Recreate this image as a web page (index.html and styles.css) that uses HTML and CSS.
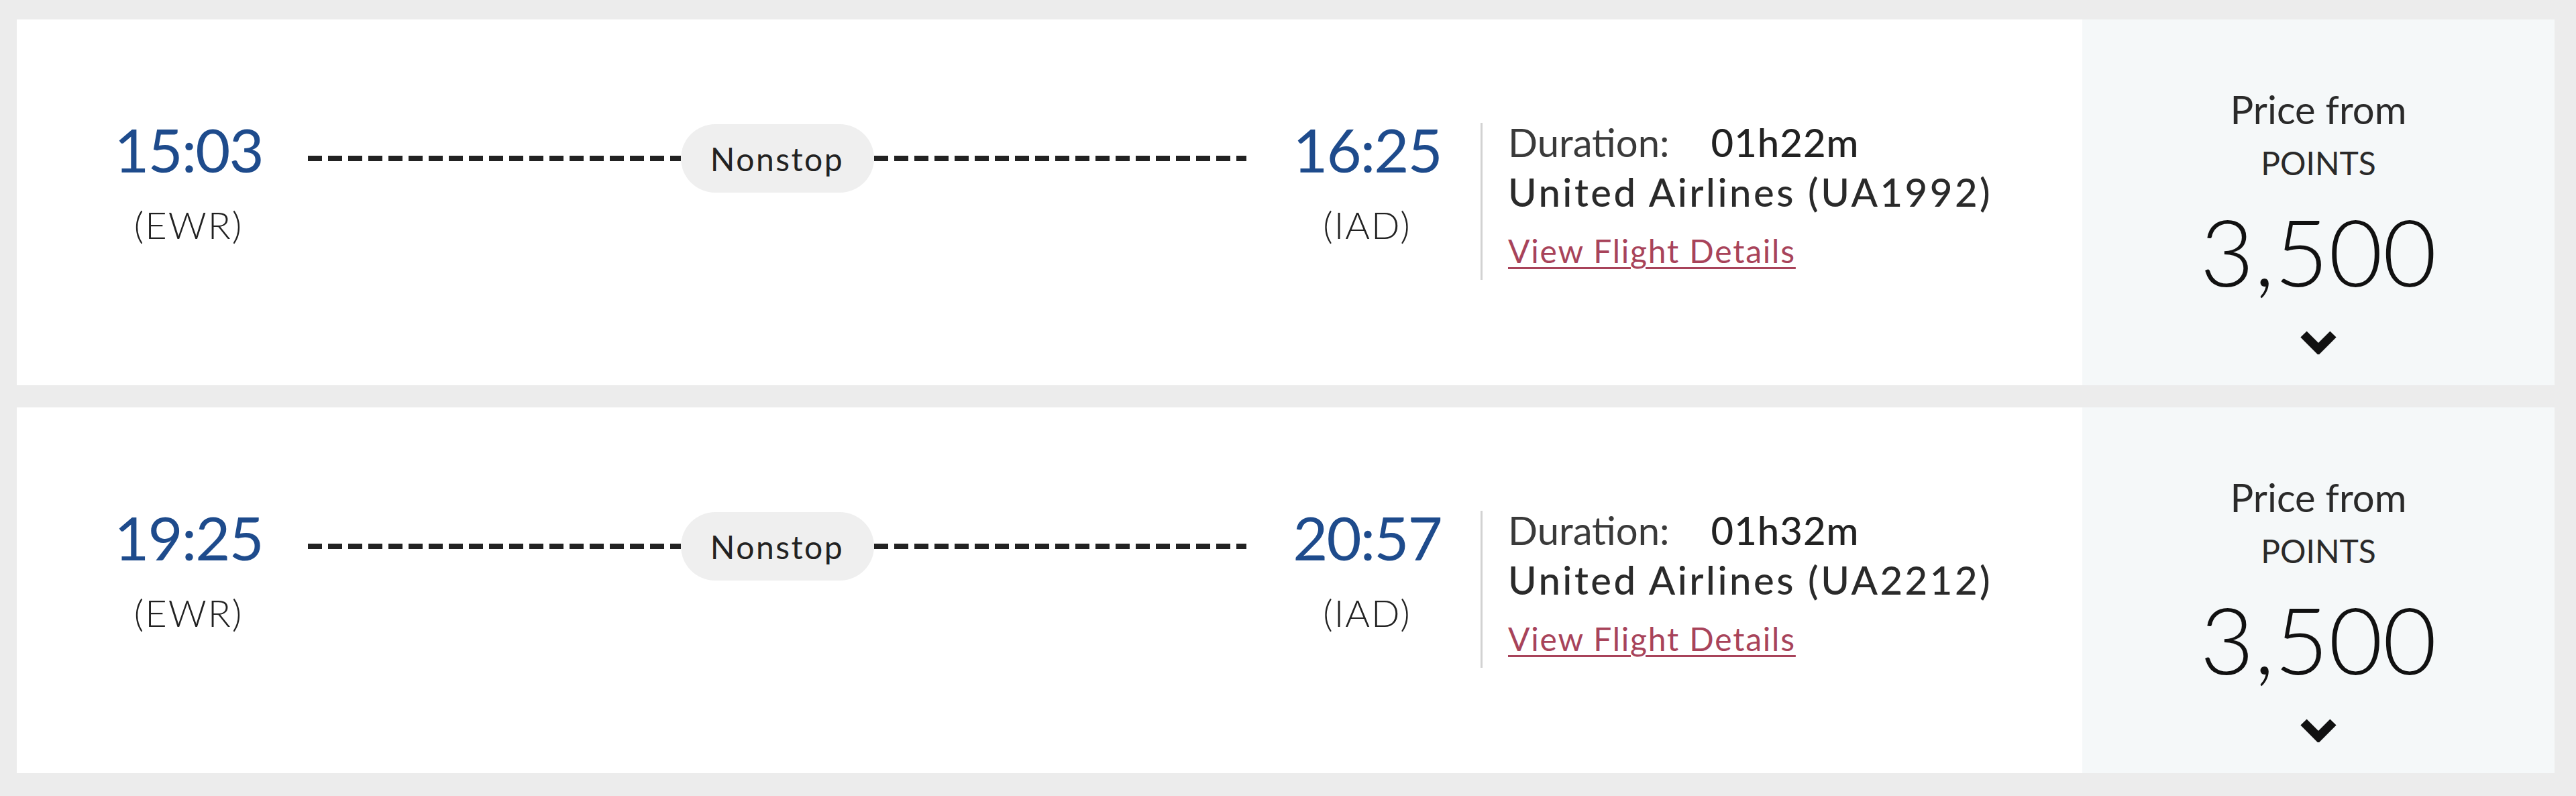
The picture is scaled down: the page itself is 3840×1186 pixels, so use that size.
FILE: index.html
```html
<!DOCTYPE html>
<html lang="en">
<head>
<meta charset="utf-8">
<title>Flights</title>
<link rel="stylesheet" href="styles.css">
</head>
<body>
<div class="list">
  <div class="card">
    <div class="main">
      <div class="tcol">
        <div class="time">15:03</div>
        <div class="code">(EWR)</div>
      </div>
      <div class="route">
        <div class="dash"></div>
        <div class="pill">Nonstop</div>
        <div class="dash"></div>
      </div>
      <div class="tcol tcol2">
        <div class="time">16:25</div>
        <div class="code">(IAD)</div>
      </div>
      <div class="info">
        <div class="dur"><span class="dlabel">Duration:</span><span class="dval">01h22m</span></div>
        <div class="airline">United Airlines (UA1992)</div>
        <a class="details" href="#">View Flight Details</a>
      </div>
    </div>
    <div class="price">
      <div class="pfrom">Price from</div>
      <div class="punit">POINTS</div>
      <div class="pval">3,500</div>
      <svg class="chev" width="54" height="36" viewBox="0 0 54 36"><path d="M5 6 L27 28 L49 6" fill="none" stroke="#111" stroke-width="13" stroke-linejoin="miter"/></svg>
    </div>
  </div>
  <div class="card">
    <div class="main">
      <div class="tcol">
        <div class="time">19:25</div>
        <div class="code">(EWR)</div>
      </div>
      <div class="route">
        <div class="dash"></div>
        <div class="pill">Nonstop</div>
        <div class="dash"></div>
      </div>
      <div class="tcol tcol2">
        <div class="time">20:57</div>
        <div class="code">(IAD)</div>
      </div>
      <div class="info">
        <div class="dur"><span class="dlabel">Duration:</span><span class="dval">01h32m</span></div>
        <div class="airline">United Airlines (UA2212)</div>
        <a class="details" href="#">View Flight Details</a>
      </div>
    </div>
    <div class="price">
      <div class="pfrom">Price from</div>
      <div class="punit">POINTS</div>
      <div class="pval">3,500</div>
      <svg class="chev" width="54" height="36" viewBox="0 0 54 36"><path d="M5 6 L27 28 L49 6" fill="none" stroke="#111" stroke-width="13" stroke-linejoin="miter"/></svg>
    </div>
  </div>
</div>
</body>
</html>
```

FILE: styles.css
```css
* { box-sizing: border-box; }
html, body {
  margin: 0;
  padding: 0;
  background: #ececec;
  font-family: Lato, "Open Sans", sans-serif;
  color: #222;
}
.list {
  display: flex;
  flex-direction: column;
  gap: 33px;
  padding: 29px 32px 0 25px;
}
.card {
  display: flex;
  height: 545px;
  background: #fff;
}
.main {
  flex: 1;
  display: flex;
  align-items: flex-start;
  padding-left: 136px;
}
.tcol {
  width: 240px;
  margin-top: 148px;
  text-align: center;
}
.time {
  font-size: 90px;
  line-height: 90px;
  color: #1e4b8c;
  letter-spacing: -2px;
}
.code {
  margin-top: 40px;
  font-size: 56px;
  line-height: 56px;
  font-weight: 300;
  letter-spacing: 2px;
  color: #222;
}
.route {
  width: 1399px;
  margin-left: 58px;
  margin-top: 156px;
  height: 102px;
  display: flex;
  align-items: center;
}
.dash {
  flex: 1;
  height: 8px;
  background: repeating-linear-gradient(to right, #222 0 21px, transparent 21px 30px);
}
.pill {
  width: 288px;
  height: 102px;
  border-radius: 51px;
  background: #efefef;
  display: flex;
  align-items: center;
  justify-content: center;
  font-size: 48px;
  letter-spacing: 2.5px;
  color: #222;
}
.tcol2 {
  margin-left: 60px;
}
.info {
  margin-left: 49px;
  margin-top: 154px;
  height: 234px;
  border-left: 3px solid #d2d2d2;
  padding-left: 38px;
  display: flex;
  flex-direction: column;
  align-items: flex-start;
}
.dur {
  font-size: 58px;
  line-height: 58px;
  color: #3a3a3a;
}
.dval {
  margin-left: 62px;
  font-weight: 500;
  letter-spacing: 1px;
  color: #222;
}
.airline {
  margin-top: 8px;
  font-size: 58px;
  line-height: 74px;
  font-weight: 500;
  letter-spacing: 3.5px;
  color: #2a2a2a;
}
.details {
  margin-top: 27px;
  font-size: 48px;
  line-height: 48px;
  color: #a8435a;
  letter-spacing: 1.8px;
  text-decoration: underline;
  text-decoration-thickness: 3px;
  text-underline-offset: 6px;
}
.price {
  width: 704px;
  background: #f5f8f9;
  display: flex;
  flex-direction: column;
  align-items: center;
  padding-top: 105px;
}
.pfrom {
  font-size: 58px;
  line-height: 58px;
  color: #2a2a2a;
}
.punit {
  margin-top: 27px;
  font-size: 48px;
  line-height: 48px;
  color: #2a2a2a;
}
.pval {
  margin-top: 37px;
  font-size: 139px;
  line-height: 139px;
  font-weight: 300;
  color: #111;
}
.chev {
  margin-top: 49px;
  display: block;
}
```
